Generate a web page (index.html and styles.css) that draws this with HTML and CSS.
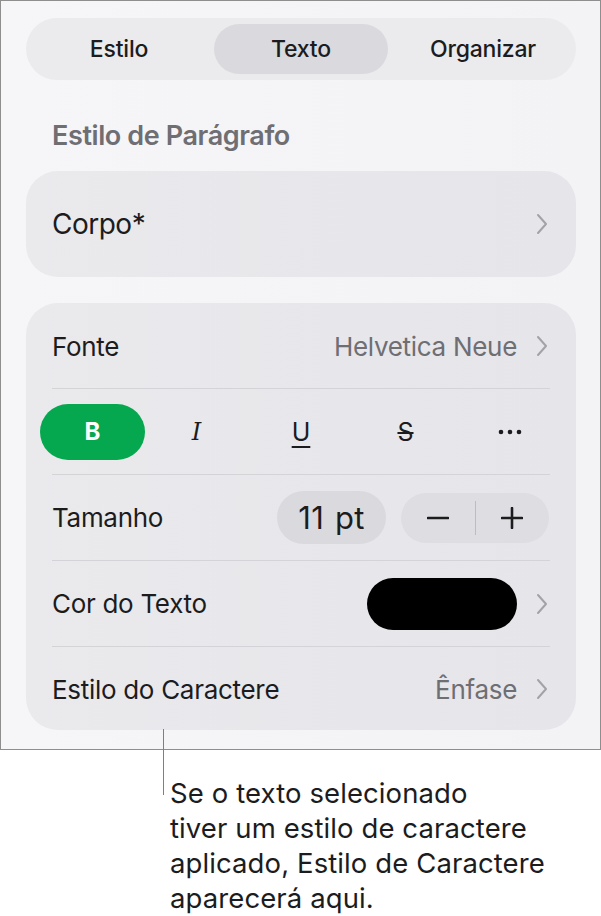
FILE: index.html
```html
<!DOCTYPE html>
<html lang="pt">
<head>
<meta charset="utf-8">
<link rel="stylesheet" href="styles.css">
</head>
<body>
<div class="panel">
  <div class="segmented">
    <div class="seg">Estilo</div>
    <div class="seg seg-active">Texto</div>
    <div class="seg">Organizar</div>
  </div>

  <div class="heading">Estilo de Parágrafo</div>

  <div class="card card-single">
    <span class="label label-large">Corpo*</span>
    <svg class="chev" viewBox="0 0 12 22" width="12" height="22"><path d="M2 2 L10 11 L2 20" fill="none" stroke="#a2a2a7" stroke-width="2" stroke-linecap="round" stroke-linejoin="round"/></svg>
  </div>

  <div class="card card-list">
    <div class="row">
      <span class="label">Fonte</span>
      <span class="right">
        <span class="value">Helvetica Neue</span>
        <svg class="chev" viewBox="0 0 12 22" width="12" height="22"><path d="M2 2 L10 11 L2 20" fill="none" stroke="#a2a2a7" stroke-width="2" stroke-linecap="round" stroke-linejoin="round"/></svg>
      </span>
    </div>
    <div class="sep"></div>
    <div class="row row-format">
      <div class="fmt fmt-bold">B</div>
      <div class="fmt fmt-italic">I</div>
      <div class="fmt fmt-under">U</div>
      <div class="fmt fmt-strike">S</div>
      <div class="fmt fmt-more">
        <svg viewBox="0 0 24 6" width="24" height="6"><circle cx="3" cy="3" r="2.3" fill="#1c1c1e"/><circle cx="12" cy="3" r="2.3" fill="#1c1c1e"/><circle cx="21" cy="3" r="2.3" fill="#1c1c1e"/></svg>
      </div>
    </div>
    <div class="sep"></div>
    <div class="row">
      <span class="label">Tamanho</span>
      <span class="right">
        <span class="size-pill">11 pt</span>
        <span class="stepper">
          <span class="step">
            <svg viewBox="0 0 22 22" width="22" height="22"><path d="M1 11 H21" stroke="#1c1c1e" stroke-width="2.6" stroke-linecap="round"/></svg>
          </span>
          <span class="step-div"></span>
          <span class="step">
            <svg viewBox="0 0 22 22" width="22" height="22"><path d="M1 11 H21 M11 1 V21" stroke="#1c1c1e" stroke-width="2.6" stroke-linecap="round"/></svg>
          </span>
        </span>
      </span>
    </div>
    <div class="sep"></div>
    <div class="row">
      <span class="label">Cor do Texto</span>
      <span class="right">
        <span class="swatch"></span>
        <svg class="chev" viewBox="0 0 12 22" width="12" height="22"><path d="M2 2 L10 11 L2 20" fill="none" stroke="#a2a2a7" stroke-width="2" stroke-linecap="round" stroke-linejoin="round"/></svg>
      </span>
    </div>
    <div class="sep"></div>
    <div class="row">
      <span class="label">Estilo do Caractere</span>
      <span class="right">
        <span class="value">Ênfase</span>
        <svg class="chev" viewBox="0 0 12 22" width="12" height="22"><path d="M2 2 L10 11 L2 20" fill="none" stroke="#a2a2a7" stroke-width="2" stroke-linecap="round" stroke-linejoin="round"/></svg>
      </span>
    </div>
  </div>
</div>

<div class="callout">
  <p class="callout-text">Se o texto selecionado<br>tiver um estilo de caractere<br>aplicado, Estilo de Caractere<br>aparecerá aqui.</p>
</div>
</body>
</html>
```

FILE: styles.css
```css
* {
  box-sizing: border-box;
}

html, body {
  margin: 0;
  padding: 0;
  background: #ffffff;
}

body {
  font-family: Inter, Roboto, "Noto Sans", sans-serif;
  color: #1c1c1e;
  width: 601px;
}

.panel {
  width: 601px;
  height: 750px;
  border: 1px solid #8e8e8e;
  background: linear-gradient(90deg, #f6f6f8 0%, #f3f3f6 100%);
  padding: 17px 24px 0 25px;
}

.segmented {
  height: 62px;
  border-radius: 31px;
  background: #ebebee;
  padding: 6px 6px;
  display: grid;
  grid-template-columns: 1fr 1fr 1fr;
  column-gap: 8px;
}

.seg {
  display: flex;
  align-items: center;
  justify-content: center;
  font-size: 23px;
  font-weight: 500;
  color: #1c1c1e;
  border-radius: 25px;
  letter-spacing: -0.2px;
}

.seg-active {
  background: #dadade;
}

.heading {
  margin-top: 41px;
  padding-left: 26px;
  height: 30px;
  line-height: 30px;
  font-size: 27px;
  font-weight: 600;
  color: #6e6e73;
  letter-spacing: -0.4px;
}

.card {
  background: linear-gradient(90deg, #eaeaed 0%, #e5e5ea 100%);
  border-radius: 32px;
}

.card-single {
  margin-top: 20px;
  height: 106px;
  display: flex;
  align-items: center;
  justify-content: space-between;
  padding: 0 28px 0 26px;
}

.label {
  font-size: 26px;
  color: #1c1c1e;
  letter-spacing: -0.3px;
}

.label-large {
  font-size: 28px;
  letter-spacing: -0.5px;
}

.chev {
  display: block;
  flex: none;
}

.card-list {
  margin-top: 26px;
  padding: 1px 0 0;
  height: 427px;
}

.row {
  height: 85px;
  display: flex;
  align-items: center;
  justify-content: space-between;
  padding: 0 28px 0 26px;
}

.row:first-child,
.row:last-child {
  height: 84px;
}

.sep {
  height: 1px;
  margin: 0 26px;
  background: #d3d3d8;
}

.right {
  display: flex;
  align-items: center;
}

.value {
  font-size: 26px;
  color: #6e6e73;
  letter-spacing: -0.3px;
  margin-right: 19px;
}

.row-format {
  display: grid;
  grid-template-columns: repeat(5, 104px);
  padding: 0 14px;
  align-items: center;
}

.fmt {
  height: 56px;
  display: flex;
  align-items: center;
  justify-content: center;
  font-size: 25px;
  color: #1c1c1e;
}

.fmt-bold {
  background: #05a84f;
  color: #ffffff;
  font-weight: 700;
  font-size: 24px;
  border-radius: 28px;
  margin-right: -1px;
}

.fmt-italic {
  font-family: "DejaVu Serif", serif;
  font-style: italic;
  font-size: 24px;
}

.fmt-under {
  text-decoration: underline;
  text-decoration-thickness: 2px;
  text-underline-offset: 5px;
  font-size: 25px;
}

.fmt-strike {
  text-decoration: line-through;
  text-decoration-thickness: 2px;
  font-size: 25px;
}

.size-pill {
  width: 109px;
  height: 53px;
  border-radius: 27px;
  background: #dadade;
  display: flex;
  align-items: center;
  justify-content: center;
  font-size: 31px;
  letter-spacing: 0.3px;
  word-spacing: 2px;
  margin-right: 15px;
}

.stepper {
  width: 148px;
  height: 50px;
  border-radius: 25px;
  background: #dedee2;
  display: flex;
  align-items: center;
  margin-right: -1px;
}

.step {
  flex: 1;
  display: flex;
  align-items: center;
  justify-content: center;
}

.step-div {
  width: 1px;
  height: 34px;
  background: #bcbcc1;
}

.swatch {
  width: 150px;
  height: 52px;
  border-radius: 26px;
  background: #000000;
  margin-right: 19px;
}

.callout {
  padding-left: 163px;
}

.callout-text {
  position: relative;
  margin: 26px 0 0;
  padding-left: 7px;
  font-size: 27.5px;
  line-height: 35px;
  color: #1c1c1e;
  letter-spacing: 0.1px;
}

.callout-text::before {
  content: "";
  position: absolute;
  left: 0;
  top: -47px;
  width: 1px;
  height: 66px;
  background: #7f7f7f;
}
```
